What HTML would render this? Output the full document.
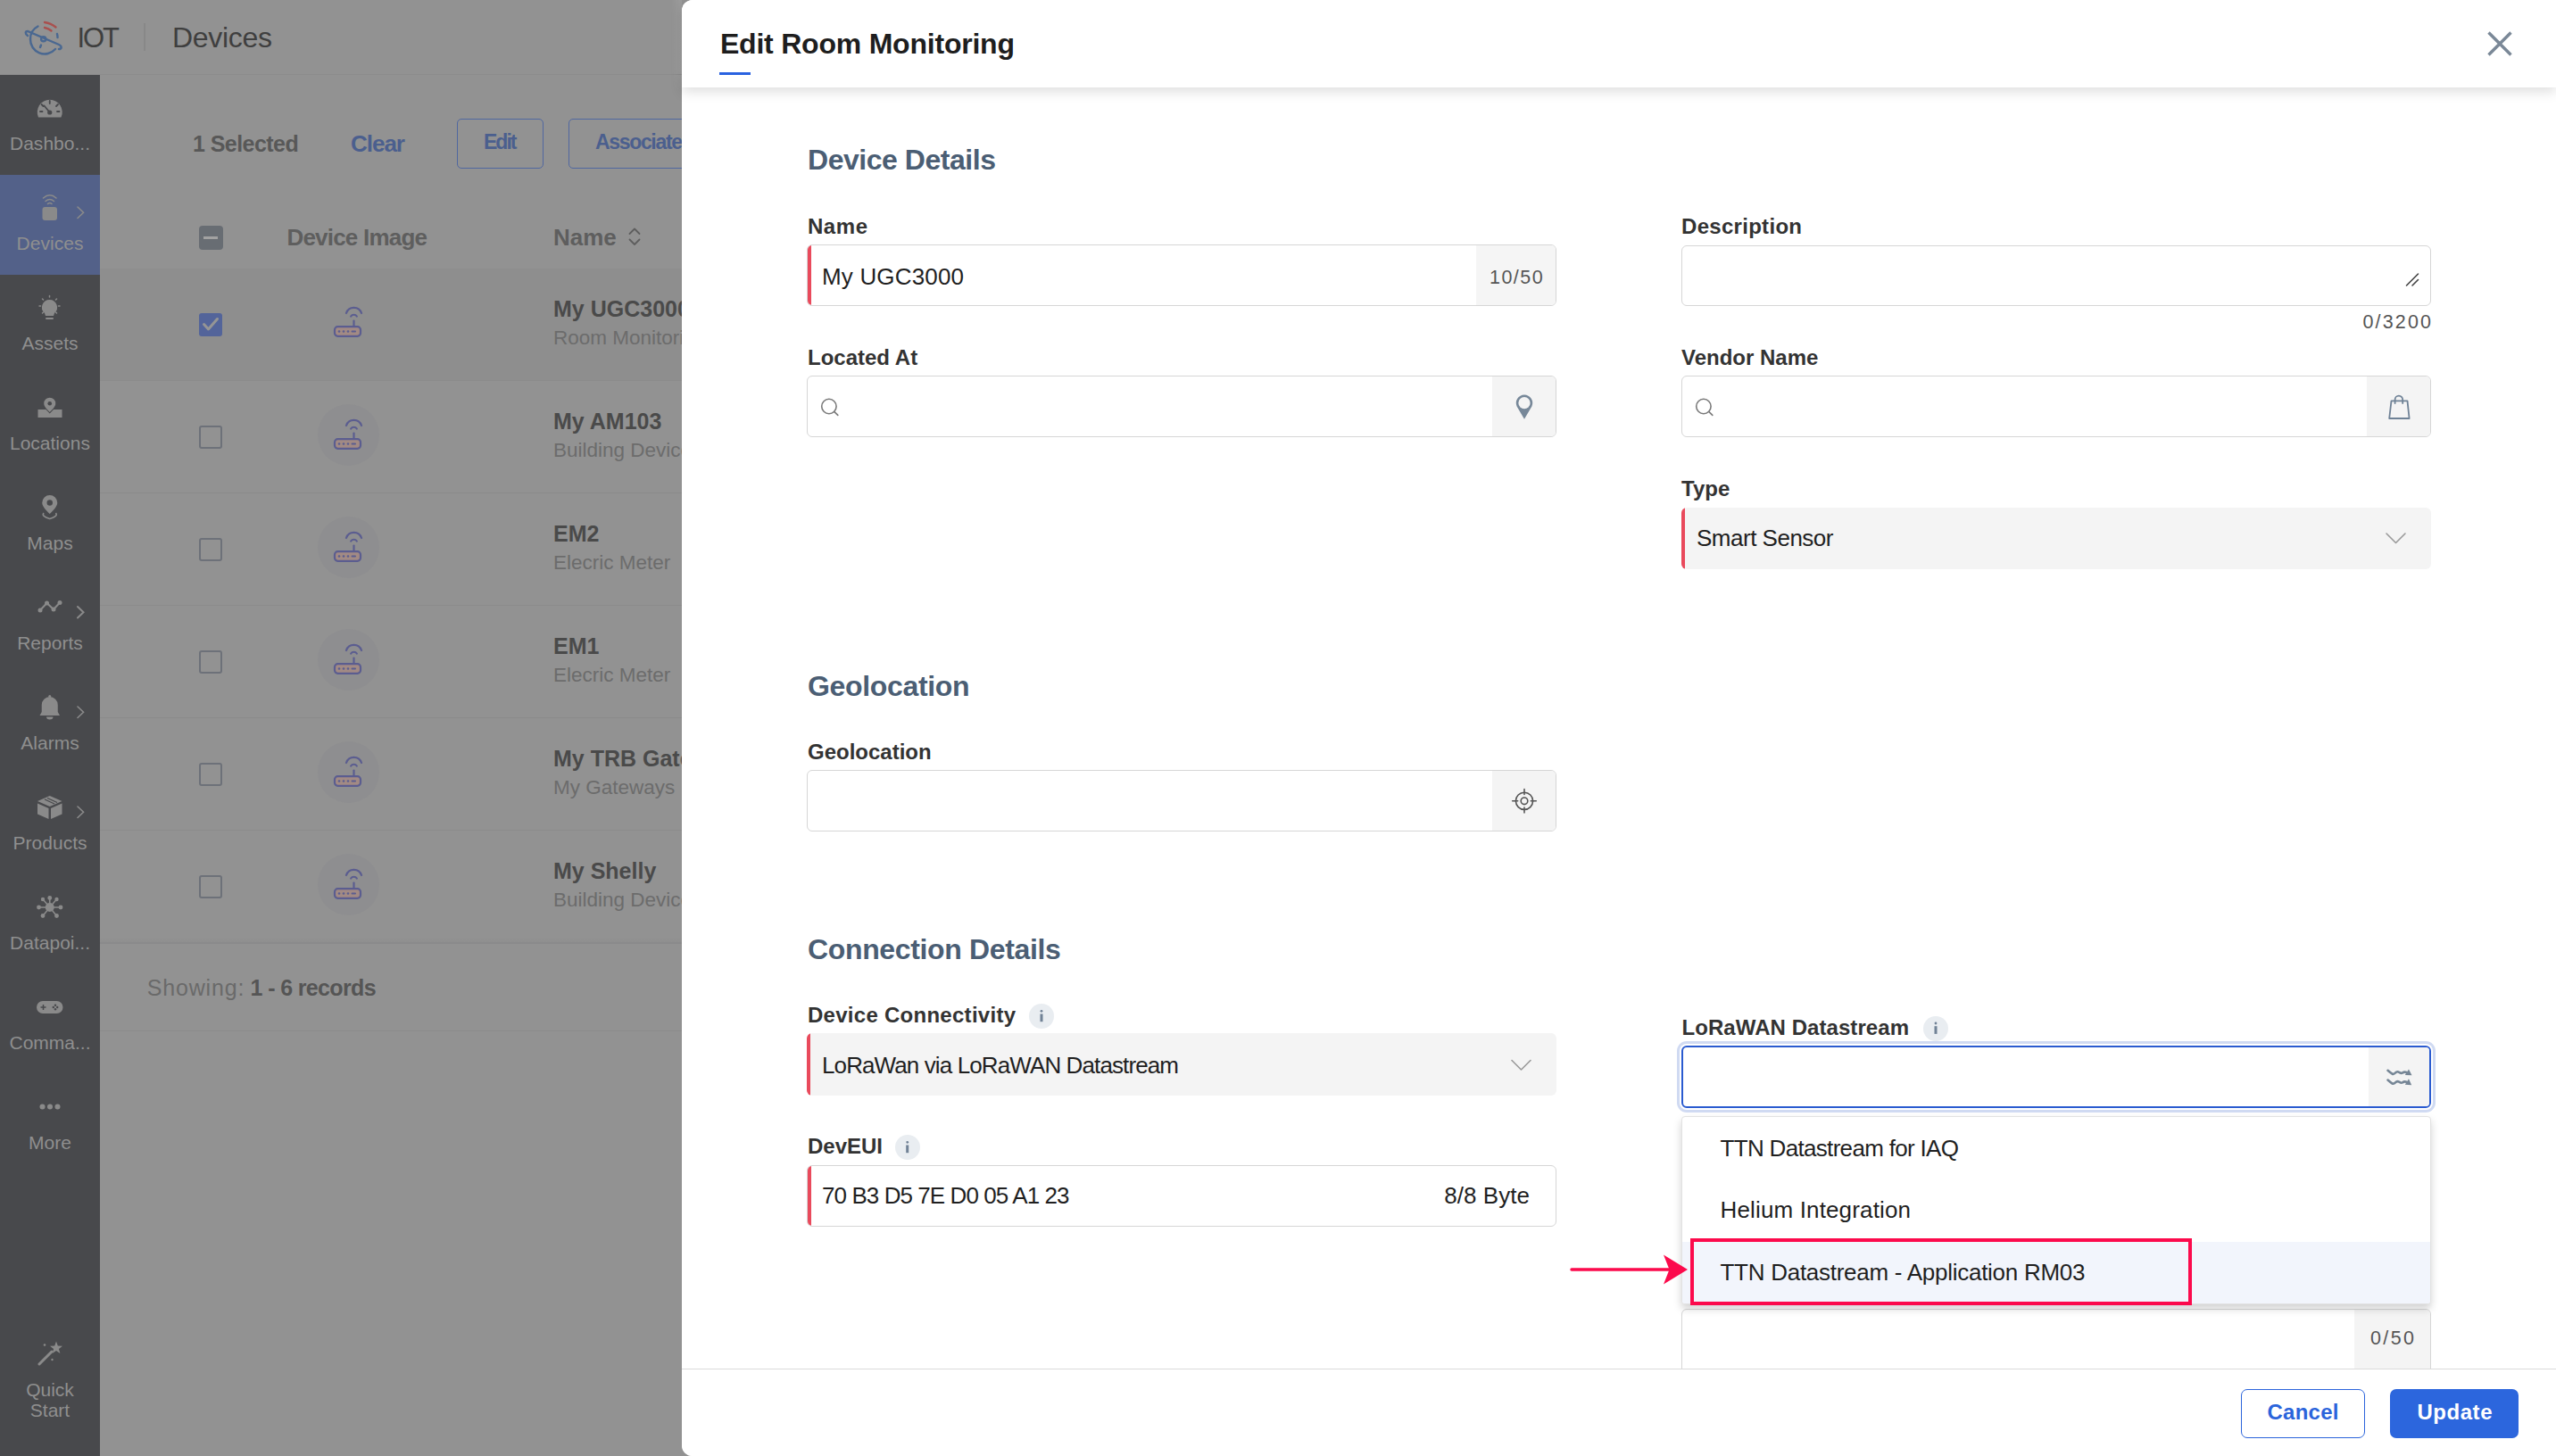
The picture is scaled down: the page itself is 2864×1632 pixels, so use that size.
<!DOCTYPE html>
<html><head><meta charset="utf-8">
<style>
*{box-sizing:border-box;margin:0;padding:0}
html,body{width:2864px;height:1632px;overflow:hidden;background:#929292;font-family:"Liberation Sans",sans-serif}
.a{position:absolute}
.t{position:absolute;white-space:nowrap;font-family:"Liberation Sans",sans-serif}
svg{position:absolute;overflow:visible}
.inp{position:absolute;background:#fff;border:1.5px solid #d6d6d6;border-radius:6px;overflow:hidden}
.redl{position:absolute;left:0;top:0;bottom:0;width:3.5px;background:#e94a5c}
.addon{position:absolute;top:0;bottom:0;right:0;background:#f4f4f4}
.info{position:absolute;width:28px;height:28px;border-radius:50%;background:#e9edf1}
</style></head><body>
<!-- ===== background app ===== -->
<div class="a" style="left:0;top:0;width:764px;height:1632px;overflow:hidden;background:#929292">
  <!-- header -->
  <div class="a" style="left:752px;top:0;width:12px;height:104px;background:linear-gradient(to right,rgba(255,255,255,0),rgba(255,255,255,0.10));-webkit-mask-image:linear-gradient(to bottom,#000 75%,transparent)"></div>
  <div class="a" style="left:0;top:83px;width:764px;height:1px;background:#8c8c8c"></div>
  <svg style="left:0;top:0" width="100" height="84" viewBox="0 0 100 84">
    <g fill="none" stroke="#4a6891" stroke-width="2.4" stroke-linecap="round">
      <path d="M42.5 29.5 A16 16 0 0 0 34 44"/>
      <path d="M34 44 A16 16 0 0 0 62 55"/>
      <path d="M64 38 A16 16 0 0 1 64.5 42"/>
      <path d="M31 40 C28 38 28 35 31 35 L66 50 C70 52 69 55 66 55"/>
      <circle cx="48.7" cy="43.7" r="2.6"/>
      <path d="M46 50.5 L45 53"/>
    </g>
    <g fill="none" stroke="#a9504e" stroke-width="2.4" stroke-linecap="round">
      <path d="M50 25 Q57 26 62.5 30.5"/>
      <path d="M50 31 Q54.5 32 57.5 34.5"/>
    </g>
  </svg>
  <div class="a" style="left:161px;top:26px;width:1.5px;height:31px;background:#888"></div>

  <!-- sidebar -->
  <div class="a" style="left:0;top:84px;width:112px;height:1548px;background:#48494c"></div>
  <div class="a" style="left:0;top:196px;width:112px;height:112px;background:#536189"></div>
  <svg style="left:0;top:84px" width="112" height="1548" viewBox="0 84 112 1548">
    <g fill="#8a8a8a" stroke="none">
      <!-- dashboard gauge -->
      <path d="M43 131.5 A14 14 0 1 1 68.5 131.5 Z"/>
    </g>
    <g fill="none" stroke="#48494c" stroke-width="1.8" stroke-linecap="round">
      <path d="M55.75 126 L49.5 118.5"/>
      <path d="M55.75 113 V116 M46.5 117 L48.5 119 M65 117 L63 119 M45 125 H47.5 M64 125 H66.5"/>
    </g>
    <circle cx="55.75" cy="126" r="2.6" fill="#48494c"/>
    <!-- devices -->
    <g fill="#8a8a8a">
      <rect x="47.5" y="232" width="16.5" height="15" rx="3"/>
    </g>
    <g fill="none" stroke="#8a8a8a" stroke-width="1.6" stroke-linecap="round">
      <path d="M48.5 222 Q55.75 215.5 63 222"/>
      <path d="M51 225.5 Q55.75 221.5 60.5 225.5"/>
      <path d="M53.5 228.5 Q55.75 226.5 58 228.5"/>
      <path d="M87 232 L93.5 238.3 L87 244.5"/>
    </g>
    <!-- assets bulb -->
    <g fill="#8a8a8a">
      <path d="M55.5 336 A8.5 8.5 0 0 1 61 351 L60 354 H51 L50 351 A8.5 8.5 0 0 1 55.5 336 Z"/>
      <rect x="51" y="356" width="9" height="2" rx="1"/>
    </g>
    <g fill="none" stroke="#8a8a8a" stroke-width="1.5" stroke-linecap="round">
      <path d="M55.5 331.5 V333 M44 343 H45.5 M65.5 343 H67 M47.5 335 L48.5 336 M63.5 335 L62.5 336 M47.5 351 L48.5 350 M63.5 351 L62.5 350"/>
    </g>
    <!-- locations -->
    <g fill="#8a8a8a">
      <path d="M55.75 445.7 A6.5 6.5 0 0 1 62.25 452.2 C62.25 456 58 459.5 55.75 462 C53.5 459.5 49.25 456 49.25 452.2 A6.5 6.5 0 0 1 55.75 445.7 Z"/>
      <path d="M42.5 459 H51.5 L55.75 463.5 L60 459 H69.5 V468 H42.5 Z"/>
    </g>
    <circle cx="55.75" cy="452.2" r="2.3" fill="#48494c"/>
    <!-- maps -->
    <g fill="#8a8a8a">
      <path d="M55.75 555 A8.5 8.5 0 0 1 64.25 563.5 C64.25 568 59 572.5 55.75 576 C52.5 572.5 47.25 568 47.25 563.5 A8.5 8.5 0 0 1 55.75 555 Z"/>
    </g>
    <circle cx="55.75" cy="563.5" r="3.2" fill="#48494c"/>
    <path d="M49 575 Q46 578.5 55.75 581.5 Q65.5 578.5 62.5 575" fill="none" stroke="#8a8a8a" stroke-width="1.6"/>
    <!-- reports -->
    <g fill="none" stroke="#8a8a8a" stroke-width="2" stroke-linecap="round">
      <path d="M45 684 L52.5 676 L60 683 L67 675.5"/>
      <path d="M87 680 L93.5 686.3 L87 692.5"/>
    </g>
    <g fill="#8a8a8a"><circle cx="45" cy="684" r="2.5"/><circle cx="52.5" cy="676" r="2.5"/><circle cx="60" cy="683" r="2.5"/><circle cx="67" cy="675.5" r="2.5"/></g>
    <!-- alarms bell -->
    <g fill="#8a8a8a">
      <path d="M55.75 781 A9 9 0 0 1 64.75 790 V798 L67 802 H44.5 L46.75 798 V790 A9 9 0 0 1 55.75 781 Z"/>
      <path d="M52 803.5 H59.5 A3.75 3 0 0 1 52 803.5 Z"/>
      <rect x="54.25" y="779" width="3" height="3" rx="1.5"/>
    </g>
    <path d="M87 792 L93.5 798.3 L87 804.5" fill="none" stroke="#8a8a8a" stroke-width="1.6" stroke-linecap="round"/>
    <!-- products box -->
    <g fill="#8a8a8a">
      <path d="M55.75 892 L69.5 898 L55.75 904 L42 898 Z"/>
      <path d="M42 900.5 L54.5 906 V918 L42 912.5 Z"/>
      <path d="M69.5 900.5 L57 906 V918 L69.5 912.5 Z"/>
    </g>
    <path d="M50 896 L61 901 M53 894.5 L64 899.5" stroke="#48494c" stroke-width="1.2"/>
    <path d="M87 904 L93.5 910.3 L87 916.5" fill="none" stroke="#8a8a8a" stroke-width="1.6" stroke-linecap="round"/>
    <!-- datapoints -->
    <g fill="none" stroke="#8a8a8a" stroke-width="1.6">
      <path d="M55.75 1017 L55.75 1007 M55.75 1017 L44 1017 M55.75 1017 L67.5 1017 M55.75 1017 L48.5 1026 M55.75 1017 L63 1026 M55.75 1017 L48.5 1008.5 M55.75 1017 L63 1008.5"/>
    </g>
    <g fill="#8a8a8a">
      <circle cx="55.75" cy="1017" r="5"/>
      <circle cx="55.75" cy="1006.5" r="2.4"/><circle cx="43.5" cy="1017" r="2.4"/><circle cx="68" cy="1017" r="2.4"/>
      <circle cx="48" cy="1026.5" r="2.4"/><circle cx="63.5" cy="1026.5" r="2.4"/><circle cx="48" cy="1008" r="2.2"/><circle cx="63.5" cy="1008" r="2.2"/>
    </g>
    <!-- commands gamepad -->
    <path d="M48 1122 H63.5 A7 7 0 0 1 63.5 1136 H48 A7 7 0 0 1 48 1122 Z" fill="#8a8a8a"/>
    <path d="M45.5 1129 H51.5 M48.5 1126 V1132" stroke="#48494c" stroke-width="1.5"/>
    <g fill="#48494c"><circle cx="62" cy="1126.8" r="1.2"/><circle cx="62" cy="1131.2" r="1.2"/><circle cx="59.8" cy="1129" r="1.2"/><circle cx="64.2" cy="1129" r="1.2"/></g>
    <!-- more -->
    <g fill="#8a8a8a"><circle cx="47.5" cy="1240.6" r="3"/><circle cx="56" cy="1240.6" r="3"/><circle cx="64.5" cy="1240.6" r="3"/></g>
    <!-- quick start wand -->
    <path d="M44 1529 L58 1515" stroke="#8a8a8a" stroke-width="3" stroke-linecap="round"/>
    <path d="M63 1503.5 L64.8 1508.5 L70 1508.7 L65.9 1511.9 L67.4 1517 L63 1514 L58.6 1517 L60.1 1511.9 L56 1508.7 L61.2 1508.5 Z" fill="#8a8a8a"/>
    <g fill="#8a8a8a"><circle cx="50" cy="1507.5" r="1.3"/><circle cx="58.5" cy="1524" r="1.2"/></g>
  </svg>

  <!-- toolbar buttons -->
  <div class="a" style="left:512px;top:133px;width:97px;height:56px;border:1.5px solid #5067a0;border-radius:5px"></div>
  <div class="a" style="left:637px;top:133px;width:200px;height:56px;border:1.5px solid #5067a0;border-radius:5px"></div>

  <!-- table header -->
  <div class="a" style="left:112px;top:301px;width:652px;height:125.5px;background:#8e8e8e"></div>
  <div class="a" style="left:222.5px;top:252.5px;width:27px;height:27px;border-radius:4px;background:#686d73"></div>
  <div class="a" style="left:228px;top:264.5px;width:16px;height:3px;background:#a2a2a2"></div>
  <svg style="left:0;top:0" width="764" height="320" viewBox="0 0 764 320">
    <path d="M705.5 262 L711 256.5 L716.5 262 M705.5 268.5 L711 274 L716.5 268.5" fill="none" stroke="#5e5e5e" stroke-width="1.8" stroke-linecap="round" stroke-linejoin="round"/>
  </svg>
  <!-- rows -->
  <div class="a" style="left:112px;top:426px;width:652px;height:1px;background:#8b8b8b"></div>
  <div class="a" style="left:112px;top:552px;width:652px;height:1px;background:#8b8b8b"></div>
  <div class="a" style="left:112px;top:678px;width:652px;height:1px;background:#8b8b8b"></div>
  <div class="a" style="left:112px;top:804px;width:652px;height:1px;background:#8b8b8b"></div>
  <div class="a" style="left:112px;top:930px;width:652px;height:1px;background:#8b8b8b"></div>
  <div class="a" style="left:112px;top:1050px;width:652px;height:6px;background:linear-gradient(rgba(0,0,0,0),rgba(0,0,0,0.02))"></div>
  <div class="a" style="left:112px;top:1056px;width:652px;height:2px;background:#8a8a8b"></div>
  <div class="a" style="left:112px;top:1155px;width:652px;height:1px;background:#8b8b8b"></div>
  <!-- checkboxes -->
  <div class="a" style="left:222.5px;top:350.5px;width:26.5px;height:26.5px;border-radius:3px;background:#53649a"></div>
  <svg style="left:0;top:0" width="764" height="1000" viewBox="0 0 764 1000">
    <path d="M228.5 363.5 L233.5 369 L243.5 357.5" fill="none" stroke="#959595" stroke-width="3" stroke-linecap="round" stroke-linejoin="round"/>
  </svg>
  <svg style="left:0;top:0" width="764" height="1632" viewBox="0 0 764 1632">
<rect x="375" y="366.2" width="29" height="10.6" rx="3.5" fill="#a28a84" stroke="#5b5d90" stroke-width="2.2"/>
<g fill="#5b5d90"><circle cx="380" cy="371.5" r="1.3"/><circle cx="385" cy="371.5" r="1.3"/><circle cx="390" cy="371.5" r="1.3"/><rect x="393.5" y="370.4" width="5.5" height="2.2" rx="1"/></g>
<g fill="none" stroke="#5b5d90" stroke-width="2.2" stroke-linecap="round"><path d="M396.5 359.5 V365"/><path d="M388 351 A9 9 0 0 1 405 351"/><path d="M393.2 354.5 A4 4 0 0 1 399.8 354.5"/></g>
</svg>
<div class="a" style="left:223px;top:476.5px;width:26px;height:26px;border:2px solid #6d7179;border-radius:3px"></div>
<div class="a" style="left:355.8px;top:452.6px;width:69.2px;height:69.2px;border-radius:50%;background:#8e8e90"></div>
<svg style="left:0;top:0" width="764" height="1632" viewBox="0 0 764 1632">
<rect x="375" y="492.2" width="29" height="10.6" rx="3.5" fill="#a28a84" stroke="#5b5d90" stroke-width="2.2"/>
<g fill="#5b5d90"><circle cx="380" cy="497.5" r="1.3"/><circle cx="385" cy="497.5" r="1.3"/><circle cx="390" cy="497.5" r="1.3"/><rect x="393.5" y="496.4" width="5.5" height="2.2" rx="1"/></g>
<g fill="none" stroke="#5b5d90" stroke-width="2.2" stroke-linecap="round"><path d="M396.5 485.5 V491"/><path d="M388 477 A9 9 0 0 1 405 477"/><path d="M393.2 480.5 A4 4 0 0 1 399.8 480.5"/></g>
</svg>
<div class="a" style="left:223px;top:602.5px;width:26px;height:26px;border:2px solid #6d7179;border-radius:3px"></div>
<div class="a" style="left:355.8px;top:578.6px;width:69.2px;height:69.2px;border-radius:50%;background:#8e8e90"></div>
<svg style="left:0;top:0" width="764" height="1632" viewBox="0 0 764 1632">
<rect x="375" y="618.2" width="29" height="10.6" rx="3.5" fill="#a28a84" stroke="#5b5d90" stroke-width="2.2"/>
<g fill="#5b5d90"><circle cx="380" cy="623.5" r="1.3"/><circle cx="385" cy="623.5" r="1.3"/><circle cx="390" cy="623.5" r="1.3"/><rect x="393.5" y="622.4" width="5.5" height="2.2" rx="1"/></g>
<g fill="none" stroke="#5b5d90" stroke-width="2.2" stroke-linecap="round"><path d="M396.5 611.5 V617"/><path d="M388 603 A9 9 0 0 1 405 603"/><path d="M393.2 606.5 A4 4 0 0 1 399.8 606.5"/></g>
</svg>
<div class="a" style="left:223px;top:728.5px;width:26px;height:26px;border:2px solid #6d7179;border-radius:3px"></div>
<div class="a" style="left:355.8px;top:704.6px;width:69.2px;height:69.2px;border-radius:50%;background:#8e8e90"></div>
<svg style="left:0;top:0" width="764" height="1632" viewBox="0 0 764 1632">
<rect x="375" y="744.2" width="29" height="10.6" rx="3.5" fill="#a28a84" stroke="#5b5d90" stroke-width="2.2"/>
<g fill="#5b5d90"><circle cx="380" cy="749.5" r="1.3"/><circle cx="385" cy="749.5" r="1.3"/><circle cx="390" cy="749.5" r="1.3"/><rect x="393.5" y="748.4" width="5.5" height="2.2" rx="1"/></g>
<g fill="none" stroke="#5b5d90" stroke-width="2.2" stroke-linecap="round"><path d="M396.5 737.5 V743"/><path d="M388 729 A9 9 0 0 1 405 729"/><path d="M393.2 732.5 A4 4 0 0 1 399.8 732.5"/></g>
</svg>
<div class="a" style="left:223px;top:854.5px;width:26px;height:26px;border:2px solid #6d7179;border-radius:3px"></div>
<div class="a" style="left:355.8px;top:830.6px;width:69.2px;height:69.2px;border-radius:50%;background:#8e8e90"></div>
<svg style="left:0;top:0" width="764" height="1632" viewBox="0 0 764 1632">
<rect x="375" y="870.2" width="29" height="10.6" rx="3.5" fill="#a28a84" stroke="#5b5d90" stroke-width="2.2"/>
<g fill="#5b5d90"><circle cx="380" cy="875.5" r="1.3"/><circle cx="385" cy="875.5" r="1.3"/><circle cx="390" cy="875.5" r="1.3"/><rect x="393.5" y="874.4" width="5.5" height="2.2" rx="1"/></g>
<g fill="none" stroke="#5b5d90" stroke-width="2.2" stroke-linecap="round"><path d="M396.5 863.5 V869"/><path d="M388 855 A9 9 0 0 1 405 855"/><path d="M393.2 858.5 A4 4 0 0 1 399.8 858.5"/></g>
</svg>
<div class="a" style="left:223px;top:980.5px;width:26px;height:26px;border:2px solid #6d7179;border-radius:3px"></div>
<div class="a" style="left:355.8px;top:956.6px;width:69.2px;height:69.2px;border-radius:50%;background:#8e8e90"></div>
<svg style="left:0;top:0" width="764" height="1632" viewBox="0 0 764 1632">
<rect x="375" y="996.2" width="29" height="10.6" rx="3.5" fill="#a28a84" stroke="#5b5d90" stroke-width="2.2"/>
<g fill="#5b5d90"><circle cx="380" cy="1001.5" r="1.3"/><circle cx="385" cy="1001.5" r="1.3"/><circle cx="390" cy="1001.5" r="1.3"/><rect x="393.5" y="1000.4" width="5.5" height="2.2" rx="1"/></g>
<g fill="none" stroke="#5b5d90" stroke-width="2.2" stroke-linecap="round"><path d="M396.5 989.5 V995"/><path d="M388 981 A9 9 0 0 1 405 981"/><path d="M393.2 984.5 A4 4 0 0 1 399.8 984.5"/></g>
</svg>
  <div class="t" style="left:86.5px;top:26.8px;font-size:31px;line-height:31px;font-weight:400;color:#3f3f3f;letter-spacing:-2.086px;">IOT</div>
<div class="t" style="left:193.0px;top:25.9px;font-size:32px;line-height:32px;font-weight:400;color:#3f3f3f;letter-spacing:-0.302px;">Devices</div>
<div class="t" style="left:11.0px;top:149.9px;font-size:21px;line-height:21px;font-weight:400;color:#8f8f8f;letter-spacing:0.014px;">Dashbo...</div>
<div class="t" style="left:18.5px;top:261.9px;font-size:21px;line-height:21px;font-weight:400;color:#8f8f8f;letter-spacing:0.049px;">Devices</div>
<div class="t" style="left:24.5px;top:373.9px;font-size:21px;line-height:21px;font-weight:400;color:#8f8f8f;">Assets</div>
<div class="t" style="left:11.0px;top:485.9px;font-size:21px;line-height:21px;font-weight:400;color:#8f8f8f;">Locations</div>
<div class="t" style="left:30.3px;top:597.9px;font-size:21px;line-height:21px;font-weight:400;color:#8f8f8f;">Maps</div>
<div class="t" style="left:19.2px;top:709.9px;font-size:21px;line-height:21px;font-weight:400;color:#8f8f8f;">Reports</div>
<div class="t" style="left:23.3px;top:821.9px;font-size:21px;line-height:21px;font-weight:400;color:#8f8f8f;">Alarms</div>
<div class="t" style="left:14.6px;top:933.9px;font-size:21px;line-height:21px;font-weight:400;color:#8f8f8f;">Products</div>
<div class="t" style="left:11.1px;top:1045.9px;font-size:21px;line-height:21px;font-weight:400;color:#8f8f8f;">Datapoi...</div>
<div class="t" style="left:10.5px;top:1157.9px;font-size:21px;line-height:21px;font-weight:400;color:#8f8f8f;">Comma...</div>
<div class="t" style="left:32.1px;top:1269.9px;font-size:21px;line-height:21px;font-weight:400;color:#8f8f8f;">More</div>
<div class="t" style="left:29.2px;top:1546.9px;font-size:21px;line-height:21px;font-weight:400;color:#8f8f8f;">Quick</div>
<div class="t" style="left:33.8px;top:1570.2px;font-size:21px;line-height:21px;font-weight:400;color:#8f8f8f;">Start</div>
<div class="t" style="left:216.0px;top:148.8px;font-size:25px;line-height:25px;font-weight:700;color:#585858;letter-spacing:-0.554px;">1 Selected</div>
<div class="t" style="left:393.0px;top:148.0px;font-size:26px;line-height:26px;font-weight:700;color:#4b5f8e;letter-spacing:-1.012px;">Clear</div>
<div class="t" style="left:542.0px;top:148.0px;font-size:23px;line-height:23px;font-weight:700;color:#4b5f8e;letter-spacing:-1.984px;">Edit</div>
<div class="t" style="left:667.0px;top:148.0px;font-size:23px;line-height:23px;font-weight:700;color:#4b5f8e;letter-spacing:-1.334px;">Associate</div>
<div class="t" style="left:321.4px;top:253.0px;font-size:26px;line-height:26px;font-weight:700;color:#5e5e5e;letter-spacing:-0.784px;">Device Image</div>
<div class="t" style="left:620.0px;top:253.0px;font-size:26px;line-height:26px;font-weight:700;color:#5e5e5e;">Name</div>
<div class="t" style="left:620.0px;top:333.8px;font-size:25px;line-height:25px;font-weight:700;color:#4a4a4a;">My UGC3000</div>
<div class="t" style="left:620.0px;top:368.3px;font-size:22.5px;line-height:22.5px;font-weight:400;color:#6c6c6c;">Room Monitoring</div>
<div class="t" style="left:620.0px;top:459.8px;font-size:25px;line-height:25px;font-weight:700;color:#4a4a4a;">My AM103</div>
<div class="t" style="left:620.0px;top:494.3px;font-size:22.5px;line-height:22.5px;font-weight:400;color:#6c6c6c;">Building Devices</div>
<div class="t" style="left:620.0px;top:585.8px;font-size:25px;line-height:25px;font-weight:700;color:#4a4a4a;">EM2</div>
<div class="t" style="left:620.0px;top:620.3px;font-size:22.5px;line-height:22.5px;font-weight:400;color:#6c6c6c;">Elecric Meter</div>
<div class="t" style="left:620.0px;top:711.8px;font-size:25px;line-height:25px;font-weight:700;color:#4a4a4a;">EM1</div>
<div class="t" style="left:620.0px;top:746.3px;font-size:22.5px;line-height:22.5px;font-weight:400;color:#6c6c6c;">Elecric Meter</div>
<div class="t" style="left:620.0px;top:837.8px;font-size:25px;line-height:25px;font-weight:700;color:#4a4a4a;">My TRB Gateway</div>
<div class="t" style="left:620.0px;top:872.3px;font-size:22.5px;line-height:22.5px;font-weight:400;color:#6c6c6c;">My Gateways</div>
<div class="t" style="left:620.0px;top:963.8px;font-size:25px;line-height:25px;font-weight:700;color:#4a4a4a;">My Shelly</div>
<div class="t" style="left:620.0px;top:998.3px;font-size:22.5px;line-height:22.5px;font-weight:400;color:#6c6c6c;">Building Devices</div>
<div class="t" style="left:164.7px;top:1094.6px;font-size:25px;line-height:25px;font-weight:400;color:#6a6a6a;letter-spacing:0.849px;">Showing:</div>
<div class="t" style="left:280.6px;top:1094.6px;font-size:25px;line-height:25px;font-weight:700;color:#555555;letter-spacing:-0.641px;">1 - 6 records</div>
</div>

<!-- ===== modal ===== -->
<div class="a" style="left:764px;top:0;width:2110px;height:1632px;background:#fff;border-radius:12px 0 0 12px"></div>

<!-- Name input -->
<div class="inp" style="left:904px;top:274px;width:840px;height:69px"><div class="addon" style="width:89.5px;background:#f5f5f5"></div><div class="redl"></div></div>
<!-- Description -->
<div class="inp" style="left:1884px;top:275px;width:840px;height:68px"></div>
<svg style="left:0;top:0" width="2864" height="1632" viewBox="0 0 2864 1632">
  <path d="M2696.5 320 L2709.5 307 M2703 320 L2709.5 313.5" stroke="#444" stroke-width="1.6" stroke-linecap="round"/>
</svg>
<!-- Located At -->
<div class="inp" style="left:904px;top:421px;width:840px;height:69px"><div class="addon" style="width:71px"></div></div>
<!-- Vendor Name -->
<div class="inp" style="left:1884px;top:421px;width:840px;height:69px"><div class="addon" style="width:71px"></div></div>
<!-- Type select -->
<div class="a" style="left:1884px;top:568.5px;width:840px;height:69px;background:#f4f4f4;border-radius:6px;overflow:hidden"><div class="redl"></div></div>
<!-- Geolocation -->
<div class="inp" style="left:904px;top:863px;width:840px;height:69px"><div class="addon" style="width:71px"></div></div>
<!-- Device connectivity select -->
<div class="a" style="left:904px;top:1157.5px;width:840px;height:70px;background:#f4f4f4;border-radius:6px;overflow:hidden"><div class="redl"></div></div>
<!-- DevEUI -->
<div class="inp" style="left:904px;top:1305.5px;width:840px;height:69px"><div class="redl"></div></div>
<!-- LoRaWAN focused -->
<div class="a" style="left:1882px;top:1170px;width:844px;height:74px;border-radius:8px;box-shadow:0 0 0 3px rgba(40,87,197,0.22)"></div>
<div class="a" style="left:1884px;top:1172px;width:840px;height:70px;background:#fff;border:2.4px solid #2a5bd0;border-radius:6px;overflow:hidden"><div class="addon" style="width:68px"></div></div>
<!-- lower input (behind footer) -->
<div class="inp" style="left:1884px;top:1467px;width:840px;height:100px"><div class="addon" style="width:85px"></div></div>

<svg style="left:0;top:0" width="2864" height="1632" viewBox="0 0 2864 1632">
  <!-- search icons -->
  <g fill="none" stroke="#7a7a7a" stroke-width="1.6" stroke-linecap="round">
    <circle cx="928.9" cy="455.5" r="8.2"/><path d="M935 461.6 L938.8 465.4"/>
    <circle cx="1908.9" cy="455.5" r="8.2"/><path d="M1915 461.6 L1918.8 465.4"/>
  </g>
  <!-- pin -->
  <path d="M1708 442.6 A9.1 9.1 0 0 1 1716.4 455.5 L1708 469.7 L1699.6 455.5 A9.1 9.1 0 0 1 1708 442.6 Z" fill="#778899"/>
  <circle cx="1708" cy="451.7" r="6.6" fill="#f4f4f4"/>
  <!-- bag -->
  <g fill="none" stroke="#6f8296" stroke-width="1.8" stroke-linejoin="round" stroke-linecap="round">
    <path d="M2679.5 449.3 H2697.5 L2699.6 469 H2677.2 Z"/>
    <path d="M2683.6 452 V448 A4.3 4.3 0 0 1 2692.2 448 V452"/>
  </g>
  <!-- target -->
  <g fill="none" stroke="#555" stroke-width="1.6" stroke-linecap="round">
    <circle cx="1708" cy="897.8" r="9.6"/><circle cx="1708" cy="897.8" r="3.8"/>
    <path d="M1708 884.5 V890.5 M1708 905 V911 M1694.7 897.8 H1700.7 M1715.3 897.8 H1721.3"/>
  </g>
  <!-- chevrons -->
  <g fill="none" stroke="#9a9a9a" stroke-width="1.6" stroke-linecap="round" stroke-linejoin="round">
    <path d="M2674 598 L2684.5 608.5 L2695 598"/>
    <path d="M1694 1188.5 L1704.5 1199 L1715 1188.5"/>
  </g>
  <!-- datastream waves -->
  <g fill="none" stroke="#768696" stroke-width="2.6" stroke-linecap="round" stroke-linejoin="round">
    <path d="M2675.5 1199.8 Q2678 1202 2680.3 1203.5 Q2682.2 1204.5 2684 1202.5 Q2686 1200.5 2688 1201.8 Q2690 1203.5 2692 1202.6 Q2694 1201 2696.5 1202"/>
    <path d="M2675.5 1210.6 Q2678 1212.8 2680.3 1214.3 Q2682.2 1215.3 2684 1213.3 Q2686 1211.3 2688 1212.6 Q2690 1214.3 2692 1213.4 Q2694 1211.8 2696.5 1212.8"/>
  </g>
  <path d="M2699 1198.5 L2702.5 1205.3 L2694.8 1205 Z" fill="#768696"/>
  <path d="M2699 1209.3 L2702.2 1216.2 L2694.8 1215.8 Z" fill="#768696"/>
</svg>

<!-- info circles -->
<div class="info" style="left:1153px;top:1125px"></div>
<div class="info" style="left:1002.7px;top:1272px"></div>
<div class="info" style="left:2155px;top:1138.7px"></div>
<svg style="left:0;top:0" width="2864" height="1632" viewBox="0 0 2864 1632">
  <g fill="#718296">
    <circle cx="1167" cy="1133.3" r="1.4"/><rect x="1165.5" y="1136.5" width="3" height="8.7"/>
    <circle cx="1016.7" cy="1280.3" r="1.4"/><rect x="1015.2" y="1283.5" width="3" height="8.7"/>
    <circle cx="2169" cy="1147" r="1.4"/><rect x="2167.5" y="1150.2" width="3" height="8.7"/>
  </g>
</svg>

<!-- dropdown -->
<div class="a" style="left:1884px;top:1250.5px;width:840px;height:211px;background:#fff;border:1px solid #e2e2e2;border-radius:4px;box-shadow:0 5px 10px rgba(0,0,0,0.18);overflow:hidden">
  <div class="a" style="left:0;top:140px;width:840px;height:71px;background:#f2f5fc"></div>
</div>

<!-- modal header -->
<div class="a" style="left:764px;top:0;width:2100px;height:98px;background:#fff;border-radius:12px 0 0 0;box-shadow:0 5px 14px rgba(0,0,0,0.13)"></div>
<div class="a" style="left:806px;top:81px;width:35px;height:3px;background:#2a62e0"></div>
<svg style="left:0;top:0" width="2864" height="100" viewBox="0 0 2864 100">
  <path d="M2788.5 36.5 L2813.5 61.5 M2813.5 36.5 L2788.5 61.5" stroke="#7a8897" stroke-width="3.4"/>
</svg>

<!-- footer -->
<div class="a" style="left:764px;top:1534px;width:2100px;height:98px;background:#fff;border-top:1.5px solid #dadada;border-radius:0 0 0 12px"></div>
<div class="a" style="left:2511px;top:1556.5px;width:139px;height:55px;border:1.5px solid #2b64db;border-radius:7px;background:#fff"></div>
<div class="a" style="left:2678px;top:1556.5px;width:144px;height:55px;border-radius:7px;background:#2c66dd"></div>

<div class="t" style="left:807.0px;top:32.9px;font-size:32px;line-height:32px;font-weight:700;color:#1e1e1e;letter-spacing:-0.219px;">Edit Room Monitoring</div>
<div class="t" style="left:905.0px;top:162.9px;font-size:32px;line-height:32px;font-weight:700;color:#4b5e74;letter-spacing:-0.463px;">Device Details</div>
<div class="t" style="left:905.0px;top:752.9px;font-size:32px;line-height:32px;font-weight:700;color:#4b5e74;letter-spacing:-0.331px;">Geolocation</div>
<div class="t" style="left:905.0px;top:1047.5px;font-size:32px;line-height:32px;font-weight:700;color:#4b5e74;letter-spacing:-0.354px;">Connection Details</div>
<div class="t" style="left:905.0px;top:241.7px;font-size:24px;line-height:24px;font-weight:700;color:#333333;letter-spacing:0.542px;">Name</div>
<div class="t" style="left:1884.0px;top:241.7px;font-size:24px;line-height:24px;font-weight:700;color:#333333;letter-spacing:0.297px;">Description</div>
<div class="t" style="left:905.0px;top:388.7px;font-size:24px;line-height:24px;font-weight:700;color:#333333;">Located At</div>
<div class="t" style="left:1884.0px;top:388.7px;font-size:24px;line-height:24px;font-weight:700;color:#333333;">Vendor Name</div>
<div class="t" style="left:1884.0px;top:535.7px;font-size:24px;line-height:24px;font-weight:700;color:#333333;">Type</div>
<div class="t" style="left:905.0px;top:831.2px;font-size:24px;line-height:24px;font-weight:700;color:#333333;">Geolocation</div>
<div class="t" style="left:905.0px;top:1126.2px;font-size:24px;line-height:24px;font-weight:700;color:#333333;letter-spacing:0.273px;">Device Connectivity</div>
<div class="t" style="left:1884.5px;top:1140.4px;font-size:24px;line-height:24px;font-weight:700;color:#333333;letter-spacing:0.064px;">LoRaWAN Datastream</div>
<div class="t" style="left:905.0px;top:1273.2px;font-size:24px;line-height:24px;font-weight:700;color:#333333;">DevEUI</div>
<div class="t" style="left:921.0px;top:297.0px;font-size:26px;line-height:26px;font-weight:400;color:#1f1f1f;letter-spacing:0.167px;">My UGC3000</div>
<div class="t" style="left:1669.0px;top:300.8px;font-size:21.5px;line-height:21.5px;font-weight:400;color:#555;letter-spacing:1.472px;">10/50</div>
<div class="t" style="left:2647.4px;top:350.8px;font-size:21.5px;line-height:21.5px;font-weight:400;color:#555;letter-spacing:2.167px;">0/3200</div>
<div class="t" style="left:1901.0px;top:590.0px;font-size:26px;line-height:26px;font-weight:400;color:#1f1f1f;letter-spacing:-0.496px;">Smart Sensor</div>
<div class="t" style="left:921.0px;top:1180.6px;font-size:26px;line-height:26px;font-weight:400;color:#1f1f1f;letter-spacing:-0.890px;">LoRaWan via LoRaWAN Datastream</div>
<div class="t" style="left:921.0px;top:1326.6px;font-size:26px;line-height:26px;font-weight:400;color:#1f1f1f;letter-spacing:-0.922px;">70 B3 D5 7E D0 05 A1 23</div>
<div class="t" style="left:1618.3px;top:1326.6px;font-size:26px;line-height:26px;font-weight:400;color:#1f1f1f;letter-spacing:0.042px;">8/8 Byte</div>
<div class="t" style="left:1927.5px;top:1273.5px;font-size:26px;line-height:26px;font-weight:400;color:#1f1f1f;letter-spacing:-0.678px;">TTN Datastream for IAQ</div>
<div class="t" style="left:1927.5px;top:1343.4px;font-size:26px;line-height:26px;font-weight:400;color:#1f1f1f;letter-spacing:0.147px;">Helium Integration</div>
<div class="t" style="left:1927.5px;top:1413.0px;font-size:26px;line-height:26px;font-weight:400;color:#1f1f1f;letter-spacing:-0.269px;">TTN Datastream - Application RM03</div>
<div class="t" style="left:2656.0px;top:1489.6px;font-size:21.5px;line-height:21.5px;font-weight:400;color:#555;letter-spacing:2.380px;">0/50</div>
<div class="t" style="left:2540.5px;top:1571.3px;font-size:24px;line-height:24px;font-weight:700;color:#2b64db;letter-spacing:0.259px;">Cancel</div>
<div class="t" style="left:2708.5px;top:1571.3px;font-size:24px;line-height:24px;font-weight:700;color:#ffffff;letter-spacing:0.531px;">Update</div>
<div class="a" style="left:1894px;top:1388px;width:562px;height:75px;border:4px solid #fc0a4c"></div>
<svg style="left:0;top:0" width="2864" height="1632" viewBox="0 0 2864 1632">
  <path d="M1761 1423 H1872" stroke="#fc0a4c" stroke-width="3.4" stroke-linecap="round"/>
  <path d="M1891 1423 L1864 1406.5 L1870.5 1423 L1864 1439.5 Z" fill="#fc0a4c"/>
</svg>

</body></html>
